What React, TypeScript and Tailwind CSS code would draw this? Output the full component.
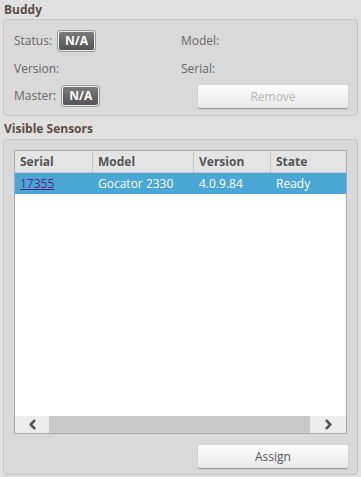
import { ChevronLeft, ChevronRight } from 'lucide-react';

const font = { fontFamily: '"Open Sans", "Liberation Sans", sans-serif' };

function Badge() {
  return (
    <span className="inline-flex h-[20px] items-center rounded-[3px] border border-[#e8e8e8] bg-gradient-to-b from-[#7a7a7a] to-[#545454] px-[6px] text-[12px] font-bold text-white shadow-[0_0_0_1px_#9a9a9a]">
      N/A
    </span>
  );
}

function Button({ label, disabled }: { label: string; disabled?: boolean }) {
  return (
    <button
      className={`h-[23px] w-[150px] rounded-[2px] bg-gradient-to-b from-[#fdfdfd] to-[#e9e9e9] text-[12px] shadow-[0_1px_1px_#8f8f8f] ${
        disabled ? 'text-[#b5b5b5]' : 'text-[#555555]'
      }`}
    >
      {label}
    </button>
  );
}

export default function App() {
  return (
    <div className="h-[477px] w-[361px] bg-[#e0e0e0] px-[3px] text-[12px] text-[#666666]" style={font}>
      {/* Buddy */}
      <div className="pl-[1px] pt-[1px] text-[12px] font-bold leading-[17px] text-[#5e4d43]">Buddy</div>
      <div className="mt-[1px] h-[97px] rounded-[4px] border border-[#c4c4c4] bg-[#d9d9d9] px-[10px] pt-[11px]">
        <div className="grid grid-cols-[167px_1fr]">
          <div className="flex h-[20px] items-center gap-[6px]">
            <span>Status:</span>
            <Badge />
          </div>
          <div className="flex h-[20px] items-center">Model:</div>
          <div className="mt-[8px] flex h-[20px] items-center">Version:</div>
          <div className="mt-[8px] flex h-[20px] items-center">Serial:</div>
          <div className="mt-[7px] flex h-[20px] items-center gap-[6px]">
            <span>Master:</span>
            <Badge />
          </div>
          <div className="mt-[6px] flex justify-end">
            <div className="-mr-[1px]">
              <Button label="Remove" disabled />
            </div>
          </div>
        </div>
      </div>

      {/* Visible Sensors */}
      <div className="mt-[4px] pl-[1px] text-[12px] font-bold leading-[17px] text-[#5e4d43]">Visible Sensors</div>
      <div className="mt-[2px] h-[336px] rounded-[4px] border border-[#c4c4c4] bg-[#d9d9d9] px-[10px] pt-[10px]">
        <div className="flex h-[284px] flex-col border border-[#a9a9a9] bg-white">
          <div className="grid h-[22px] grid-cols-[78px_101px_77px_1fr] border-b border-[#c9c9c9] bg-[#e4e4e4] text-[12px] font-bold text-[#555555]">
            <div className="flex items-center border-r border-[#c4c4c4] pl-[5px]">Serial</div>
            <div className="flex items-center border-r border-[#c4c4c4] pl-[5px]">Model</div>
            <div className="flex items-center border-r border-[#c4c4c4] pl-[5px]">Version</div>
            <div className="flex items-center pl-[5px]">State</div>
          </div>
          <div className="grid h-[21px] grid-cols-[78px_101px_77px_1fr] bg-[#4aa6d4] text-[12px] text-white">
            <div className="flex items-center pl-[5px]">
              <span className="text-[#5a1f8a] underline">17355</span>
            </div>
            <div className="flex items-center pl-[5px]">Gocator 2330</div>
            <div className="flex items-center pl-[5px]">4.0.9.84</div>
            <div className="flex items-center pl-[5px]">Ready</div>
          </div>
          <div className="flex-1" />
          <div className="flex h-[17px] bg-[#ececec]">
            <div className="flex w-[34px] items-center justify-center text-[#555555]">
              <ChevronLeft size={15} strokeWidth={4} />
            </div>
            <div className="flex-1 bg-[#c9c9c9]" />
            <div className="flex w-[36px] items-center justify-center text-[#555555]">
              <ChevronRight size={15} strokeWidth={4} />
            </div>
          </div>
        </div>
        <div className="mt-[11px] flex justify-end">
          <div className="-mr-[1px]">
            <Button label="Assign" />
          </div>
        </div>
      </div>
    </div>
  );
}
